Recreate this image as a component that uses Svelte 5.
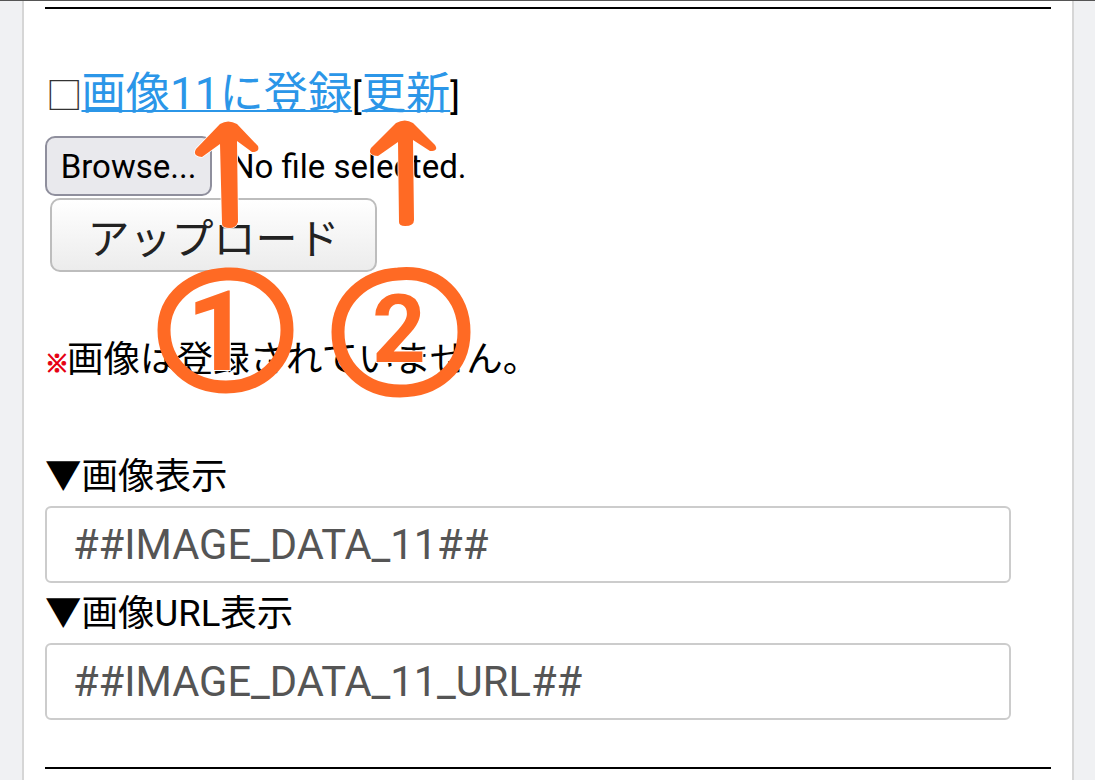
<script>
	const fields = [
		{ label: '画像表示', value: '##IMAGE_DATA_11##' },
		{ label: '画像URL表示', value: '##IMAGE_DATA_11_URL##' }
	];
</script>

<div class="page">
	<main class="sheet">
		<hr class="rule" />

		<p class="title">
			<span class="box">□</span><a href="#register">画像11に登録</a>[<a href="#update">更新</a>]
		</p>

		<div class="file-row">
			<button class="browse" type="button">Browse...</button>
			<span class="file-name">No file selected.</span>
		</div>
		<button class="upload" type="button">アップロード</button>

		<p class="notice"><span class="mark">※</span>画像は登録されていません。</p>

		<div class="fields">
			{#each fields as field}
				<label class="field">
					<span class="field-label">▼{field.label}</span>
					<input type="text" readonly value={field.value} />
				</label>
			{/each}
		</div>

		<hr class="rule end" />
	</main>

	<!-- hand drawn annotation on top of the screenshot -->
	<svg class="marks" viewBox="0 0 1095 780" aria-hidden="true">
		<path
			class="arrow"
			d="M222 224L220 144L202 157Q192 156 196 149L220 124Q228 119 237 124L258 146Q260 152 252 152L237 141L238 222Q236 228 230 228Q222 228 222 224Z"
		/>
		<path
			class="arrow"
			d="M399 222L398 142L378 156Q367 155 371 148L396 123Q405 118 413 123L435 145Q439 151 430 151L413 140L414 220Q414 226 405 226Q399 226 399 222Z"
		/>
		<path
			class="ring"
			d="M226 274C262 272 287 298 287 330C287 364 260 387 226 387C191 387 164 364 164 330C164 298 191 276 226 274Z"
		/>
		<path
			class="ring"
			d="M398 274C440 270 464 298 464 332C464 368 436 391 400 391C364 391 338 366 338 332C338 300 364 276 398 274Z"
		/>
		<text class="digit-one" x="218" y="370">1</text>
		<text class="digit-two" x="399" y="362">2</text>
	</svg>
</div>

<style>
	:global(body) {
		margin: 0;
		background: #f0f1f3;
	}

	.page {
		position: relative;
		height: 780px;
		overflow: hidden;
		padding: 0 21px 0 22px;
		font-family: Roboto, 'Noto Sans CJK JP', sans-serif;
		font-size: 36.5px;
		color: #000;
	}

	.page::before {
		content: '';
		position: absolute;
		top: 0;
		left: 0;
		right: 0;
		height: 1px;
		background: #555;
	}

	.sheet {
		box-sizing: border-box;
		height: 780px;
		padding: 7px 21px 0;
		background: #fff;
		border-left: 2px solid #d6d6d6;
		border-right: 2px solid #d6d6d6;
	}

	.rule {
		height: 2px;
		margin: 0;
		border: 0;
		background: #000;
	}

	.end {
		margin-top: 47px;
	}

	.title {
		height: 50px;
		margin: 60px 0 0;
		line-height: 50px;
		white-space: nowrap;
	}

	.box {
		margin-left: 1px;
		margin-right: -1px;
		color: #333;
	}

	.title a {
		color: #2b96e8;
		font-size: 44.2px;
		text-decoration-thickness: 2px;
	}

	.file-row {
		display: flex;
		align-items: center;
		gap: 19px;
		margin-top: 17px;
	}

	button {
		font-family: inherit;
		color: #000;
	}

	.browse {
		box-sizing: border-box;
		width: 167px;
		height: 60px;
		padding: 0;
		font-size: 33px;
		background: #e9e9ed;
		border: 2px solid #8f8f9d;
		border-radius: 10px;
	}

	.file-name {
		font-size: 33px;
	}

	.upload {
		display: block;
		box-sizing: border-box;
		width: 327px;
		height: 74px;
		margin: 2px 0 0 5px;
		padding: 0;
		font-size: 42px;
		color: #222;
		background: linear-gradient(#fff, #ececec);
		border: 2px solid #bdbdbd;
		border-radius: 10px;
	}

	.notice {
		height: 50px;
		margin: 63px 0 0;
		line-height: 50px;
		white-space: nowrap;
	}

	.mark {
		margin-right: -2px;
		color: #e60012;
		font-size: 24px;
		-webkit-text-stroke: 1px #e60012;
	}

	.fields {
		display: flex;
		flex-direction: column;
		gap: 6px;
		margin-top: 67px;
	}

	.field {
		display: flex;
		flex-direction: column;
		gap: 4px;
	}

	.field-label {
		height: 50px;
		line-height: 50px;
		white-space: nowrap;
	}

	input {
		box-sizing: border-box;
		width: 966px;
		height: 77px;
		padding: 0 26px;
		font-family: inherit;
		font-size: 41.6px;
		color: #555;
		background: #fff;
		border: 2px solid #ccc;
		border-radius: 6px;
		outline: none;
	}

	.marks {
		position: absolute;
		top: 0;
		left: 0;
		width: 1095px;
		height: 780px;
		pointer-events: none;
	}

	.arrow {
		fill: #ff6a24;
		stroke: #fff;
		stroke-width: 1.5px;
		paint-order: stroke;
	}

	.ring {
		fill: none;
		stroke: #ff6a24;
		stroke-width: 13px;
	}

	.marks text {
		font-family: Roboto, sans-serif;
		font-weight: 700;
		text-anchor: middle;
		fill: #ff6a24;
		stroke: #fff;
		stroke-width: 2px;
		paint-order: stroke;
	}

	.digit-one {
		font-size: 111px;
	}

	.digit-two {
		font-size: 94px;
	}
</style>
